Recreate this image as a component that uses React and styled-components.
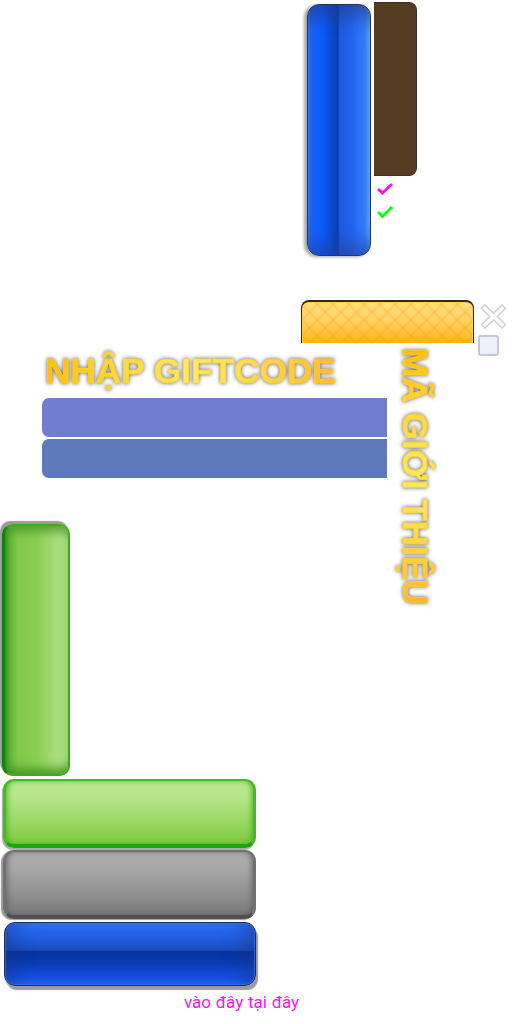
import styled, { createGlobalStyle } from "styled-components";

const Global = createGlobalStyle`
  html, body {
    margin: 0;
    padding: 0;
    background: #fff;
    font-family: Roboto, "Liberation Sans", sans-serif;
  }
`;

const Page = styled.div`
  width: 512px;
  height: 1024px;
  overflow: hidden;
  display: flex;
  flex-direction: column;
`;

const TopRow = styled.section`
  height: 300px;
  padding: 2px 0 0 307px;
  box-sizing: border-box;
  display: flex;
  gap: 3px;
  align-items: flex-start;
`;

const BlueTall = styled.div`
  width: 64px;
  height: 252px;
  margin-top: 2px;
  box-sizing: border-box;
  border: 1px solid #27345c;
  border-radius: 12px;
  background: linear-gradient(90deg, #3a7cf4 0%, #1c64fa 5%, #0a5aff 24%, #0a48c8 40%, #0a3eae 49%, #1f58dc 50%, #2364ee 72%, #347fff 92%, #5ab0ff 100%);
  box-shadow: -3px 1px 3px rgba(60, 60, 60, 0.45), inset 0 22px 16px -10px rgba(35, 60, 130, 0.6), inset 0 -22px 16px -10px rgba(35, 65, 150, 0.55);
`;

const SideStack = styled.div`
  display: flex;
  flex-direction: column;
  align-items: flex-start;
`;

const BrownPanel = styled.div`
  width: 43px;
  height: 174px;
  box-sizing: border-box;
  background: #553c23;
  border: 1px solid #3f2e22;
  border-left: none;
  border-radius: 0 8px 8px 0;
`;

const CheckIcon = styled.svg`
  width: 16px;
  height: 14px;
  margin: ${(p) => p.$top}px 0 0 3px;
  fill: none;
  stroke: ${(p) => p.$color};
  stroke-width: 3;
`;

const GiftRow = styled.section`
  height: 43px;
  padding-left: 301px;
  display: flex;
  align-items: flex-start;
  gap: 4px;
`;

const ButtonClip = styled.div`
  width: 173px;
  height: 43px;
  overflow: hidden;
`;

const YellowButton = styled.div`
  height: 64px;
  box-sizing: border-box;
  border: 1px solid #33261f;
  border-top-width: 2px;
  border-bottom: none;
  border-radius: 8px 8px 0 0;
  background:
    repeating-linear-gradient(45deg, rgba(255, 150, 20, 0) 0 7px, rgba(255, 150, 20, 0.26) 9px, rgba(255, 150, 20, 0) 11px),
    repeating-linear-gradient(-45deg, rgba(255, 150, 20, 0) 0 7px, rgba(255, 150, 20, 0.26) 9px, rgba(255, 150, 20, 0) 11px),
    linear-gradient(180deg, #ffdf80 0%, #ffd465 28%, #ffb41a 65%, #ffaa00 100%);
  box-shadow: inset 0 0 0 1px #ffd040;
`;

const ControlStack = styled.div`
  display: flex;
  flex-direction: column;
  align-items: flex-start;
  gap: 5px;
`;

const CloseIcon = styled.svg`
  width: 27px;
  height: 27px;
  margin: 3px 0 0 2px;
  display: block;
`;

const CheckBox = styled.div`
  width: 21px;
  height: 21px;
  box-sizing: border-box;
  background: #f0f0f8;
  border: 2px solid #c5c5dd;
  border-radius: 3px;
`;

const FormSection = styled.section`
  height: 178px;
  padding-left: 42px;
  display: flex;
  align-items: flex-start;
  gap: 8px;
`;

const FormColumn = styled.div`
  width: 345px;
  display: flex;
  flex-direction: column;
  gap: 2px;
`;

const shinyText = `
  font-family: "Liberation Sans", Arial, sans-serif;
  font-weight: 700;
  font-size: 35.2px;
  line-height: 40px;
  white-space: nowrap;
  color: transparent;
  -webkit-text-stroke: 0.7px rgba(255, 208, 50, 0.75);
  -webkit-background-clip: text;
  background-clip: text;
  filter: drop-shadow(0 0 2px rgba(50, 50, 50, 0.8));
`;

const Title = styled.h1`
  ${shinyText}
  align-self: flex-start;
  margin: 8px 0 5px 3px;
  background-image: linear-gradient(90deg, #ffbe0a 0%, #ffd83a 25%, #ffe95f 50%, #ffdc50 70%, #ffb92e 100%);
`;

const Bar = styled.div`
  height: 39px;
  border-radius: 7px 0 0 7px;
  background: ${(p) => p.$color};
`;

const SideTitle = styled.h2`
  ${shinyText}
  writing-mode: vertical-rl;
  margin: 5px 0 0 0;
  background-image: linear-gradient(180deg, #ffbe0a 0%, #ffd83a 25%, #ffe95f 50%, #ffdc50 70%, #ffb92e 100%);
`;

const ButtonsColumn = styled.section`
  display: flex;
  flex-direction: column;
  align-items: flex-start;
  padding-top: 3px;
`;

const GreenTall = styled.div`
  width: 68px;
  height: 252px;
  margin-left: 2px;
  box-sizing: border-box;
  border-radius: 10px;
  border: 2px solid #43a81f;
  border-left: 3px solid #158010;
  background: linear-gradient(90deg, #2f9418 0%, #62b535 8%, #80c84a 20%, #8acd52 50%, #a7dd7c 82%, #a4d97a 100%);
  box-shadow: -2px -3px 1px rgba(110, 110, 110, 0.7), inset 0 12px 8px -6px rgba(70, 150, 40, 0.75), inset 0 -12px 8px -6px rgba(60, 145, 30, 0.8);
`;

const GreenWide = styled.div`
  width: 253px;
  height: 69px;
  margin: 3px 0 0 3px;
  box-sizing: border-box;
  border-radius: 11px;
  border: 3px solid #45bb22;
  border-top-width: 2px;
  border-bottom: 4px solid #1da50e;
  background: linear-gradient(180deg, #bbe78f 0%, #b8e58b 25%, #99d864 65%, #7dca3e 100%);
  box-shadow: -1px 2px 1px rgba(110, 110, 110, 0.6), inset 3px 0 5px -1px rgba(70, 175, 30, 0.7), inset -3px 0 5px -1px rgba(70, 175, 30, 0.7);
`;

const GrayWide = styled.div`
  width: 253px;
  height: 69px;
  margin: 2px 0 0 3px;
  box-sizing: border-box;
  border-radius: 11px;
  border: 3px solid #717171;
  border-top-width: 2px;
  border-bottom: 4px solid #505050;
  background: linear-gradient(180deg, #adadad 0%, #a8a8a8 25%, #8e8e8e 70%, #787878 100%);
  box-shadow: -2px 1px 1px rgba(110, 110, 110, 0.7), inset 3px 0 5px -1px rgba(90, 90, 90, 0.6), inset -3px 0 5px -1px rgba(90, 90, 90, 0.6);
`;

const BlueWide = styled.div`
  width: 252px;
  height: 64px;
  margin: 3px 0 0 4px;
  box-sizing: border-box;
  border-radius: 11px;
  border: 1px solid #1e2c55;
  background: linear-gradient(180deg, #2e74ff 0%, #2566ee 14%, #1a4cc0 44%, #06329c 46%, #0a3cb4 66%, #1450e4 88%, #2a68f0 100%);
  box-shadow: 2px 4px 1px rgba(120, 120, 120, 0.75), inset 0 0 0 1px rgba(50, 110, 250, 0.75), inset 22px 0 22px -16px rgba(25, 55, 130, 0.6), inset -22px 0 22px -16px rgba(25, 55, 130, 0.6);
`;

const Hint = styled.p`
  margin: 6px 0 0 184px;
  font-family: Roboto, sans-serif;
  font-size: 17px;
  line-height: 20px;
  word-spacing: 0.6px;
  color: #ff12f0;
  white-space: nowrap;
`;

export default function App() {
  return (
    <Page>
      <Global />
      <TopRow>
        <BlueTall />
        <SideStack>
          <BrownPanel />
          <CheckIcon $color="#ff10f0" $top={6} viewBox="0 0 16 14">
            <path d="M1 7 L5.5 11 L15 2" />
          </CheckIcon>
          <CheckIcon $color="#10ff10" $top={9} viewBox="0 0 16 14">
            <path d="M1 7 L5.5 11.5 L15 2" />
          </CheckIcon>
        </SideStack>
      </TopRow>
      <GiftRow>
        <ButtonClip>
          <YellowButton />
        </ButtonClip>
        <ControlStack>
          <CloseIcon viewBox="0 0 28 28">
            <path
              d="M5 2 L14 10.5 L23 2 L26.5 5.5 L18 14 L26.5 22.5 L23 26 L14 17.5 L5 26 L1.5 22.5 L10 14 L1.5 5.5 Z"
              fill="#fff"
              stroke="#d2d2d2"
              strokeWidth="1.6"
            />
          </CloseIcon>
          <CheckBox />
        </ControlStack>
      </GiftRow>
      <FormSection>
        <FormColumn>
          <Title>NHẬP GIFTCODE</Title>
          <Bar $color="#717dd0" />
          <Bar $color="#5e7aba" />
        </FormColumn>
        <SideTitle>MÃ GIỚI THIỆU</SideTitle>
      </FormSection>
      <ButtonsColumn>
        <GreenTall />
        <GreenWide />
        <GrayWide />
        <BlueWide />
        <Hint>vào đây tại đây</Hint>
      </ButtonsColumn>
    </Page>
  );
}
